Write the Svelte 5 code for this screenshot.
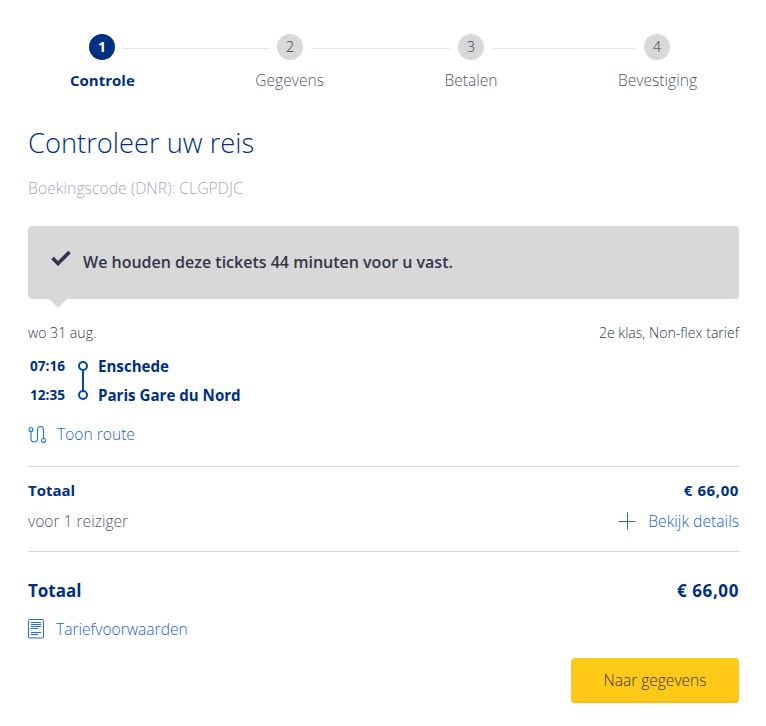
<script>
  const steps = ['Controle', 'Gegevens', 'Betalen', 'Bevestiging'];
  const lines = [146, 139, 144];
</script>

<main class="page">
  <div class="steps">
    <div class="dots">
      {#each steps as step, i}
        <span class="dot" class:active={i === 0}>{i + 1}</span>
        {#if i < 3}
          <span class="line" style="width: {lines[i]}px"></span>
        {/if}
      {/each}
    </div>
    <div class="labels">
      {#each steps as step, i}
        <span class="label" class:active={i === 0}>{step}</span>
      {/each}
    </div>
  </div>

  <h1>Controleer uw reis</h1>
  <p class="code">Boekingscode (DNR): CLGPDJC</p>

  <div class="notice">
    <svg class="check" width="20" height="16" viewBox="0 0 20 16">
      <path d="M1.5 8 L7 13.5 L18.5 2" fill="none" stroke="#35354a" stroke-width="3.6" />
    </svg>
    <strong>We houden deze tickets 44 minuten voor u vast.</strong>
  </div>

  <div class="meta">
    <span>wo 31 aug.</span>
    <span>2e klas, Non-flex tarief</span>
  </div>

  <div class="trip">
    <div class="stop">
      <span class="time">07:16</span>
      <span class="node first"></span>
      <span class="place">Enschede</span>
    </div>
    <div class="stop">
      <span class="time">12:35</span>
      <span class="node"></span>
      <span class="place">Paris Gare du Nord</span>
    </div>
  </div>

  <a class="link route" href="#route">
    <svg width="18" height="18" viewBox="0 0 18 18" fill="none" stroke="#1f6fd8" stroke-width="1.1">
      <circle cx="3" cy="4.5" r="2" />
      <circle cx="15.5" cy="15.5" r="2" />
      <path d="M3 6.5 V13.5 Q3 17 6.2 17 Q9.5 17 9.5 13.5 V5 Q9.5 1.5 12.5 1.5 Q15.5 1.5 15.5 5 V13.5" />
    </svg>
    Toon route
  </a>

  <div class="summary">
    <div class="row bold">
      <span>Totaal</span>
      <span class="price">€ 66,00</span>
    </div>
    <div class="row sub">
      <span>voor 1 reiziger</span>
      <a class="link details" href="#details">
        <svg class="plus" width="18" height="18" viewBox="0 0 18 18" fill="none">
          <path d="M0.5 9.5 H17.5 M9.5 0.5 V17.5" />
        </svg>
        Bekijk details
      </a>
    </div>
  </div>

  <div class="row total">
    <span>Totaal</span>
    <span class="price">€ 66,00</span>
  </div>

  <a class="link terms" href="#terms">
    <svg width="17" height="20" viewBox="0 0 17 20" fill="none" stroke="#1f6fd8">
      <rect x="0.5" y="0.5" width="15" height="18.5" rx="1" />
      <path d="M3 3.5 H13 M3 5.5 H13 M3 7.5 H13 M3 9.5 H10 M3 13.5 H13 M3 15.5 H10" />
    </svg>
    Tariefvoorwaarden
  </a>

  <div class="actions">
    <button type="button">Naar gegevens</button>
  </div>
</main>

<style>
  :global(body) {
    background: #fff;
    font-family: "Open Sans", "Noto Sans", sans-serif;
    color: #55556a;
  }

  .page {
    padding: 34px 27px 23px 28px;
    font-size: 14px;
    font-weight: 300;
  }

  .dots {
    display: flex;
    align-items: center;
    padding-left: 61px;
  }

  .dot {
    flex: none;
    width: 26px;
    height: 26px;
    border-radius: 50%;
    background: #d8d8d8;
    color: #35354a;
    font-size: 14px;
    font-weight: 300;
    line-height: 26px;
    text-align: center;
  }

  .dot.active {
    background: #003082;
    color: #fff;
    font-weight: 700;
  }

  .line {
    flex: none;
    height: 1px;
    margin: 2px 8px 0;
    background: #e6e6e6;
  }

  .labels {
    display: flex;
    justify-content: space-between;
    padding: 8px 42px 0;
    font-size: 15.6px;
    font-weight: 300;
    line-height: 24px;
    color: #55556a;
  }

  .label.active {
    color: #003082;
    font-size: 15px;
    font-weight: 700;
  }

  h1 {
    margin: 33px 0 0;
    color: #003082;
    font-size: 27.3px;
    font-weight: 300;
    line-height: 36px;
  }

  .code {
    margin: 16px 0 0;
    color: #a9a9b8;
    font-size: 15.8px;
    font-weight: 300;
    line-height: 22px;
  }

  .notice {
    position: relative;
    display: flex;
    align-items: center;
    gap: 12px;
    height: 73px;
    margin-top: 27px;
    padding-left: 23px;
    border-radius: 4px;
    background: #d8d8d8;
    color: #35354a;
    font-size: 16px;
    line-height: 20px;
  }

  .notice strong {
    font-weight: 600;
    margin-bottom: 2px;
  }

  .notice::after {
    content: "";
    position: absolute;
    left: 21px;
    bottom: -9px;
    border-style: solid;
    border-width: 9px 9px 0;
    border-color: #d8d8d8 transparent transparent;
  }

  .check {
    margin-top: -10px;
  }

  .meta {
    display: flex;
    justify-content: space-between;
    margin-top: 25px;
    font-size: 14.1px;
    font-weight: 300;
    line-height: 18px;
    color: #35354a;
  }

  .trip {
    margin-top: 9px;
  }

  .stop {
    display: flex;
    align-items: center;
    height: 29px;
    color: #003082;
    font-weight: 700;
  }

  .time {
    width: 50px;
    padding-left: 2px;
    box-sizing: border-box;
    font-size: 13.6px;
  }

  .node {
    position: relative;
    width: 10px;
    height: 10px;
    box-sizing: border-box;
    border: 2px solid #0047ab;
    border-radius: 50%;
  }

  .node.first::after {
    content: "";
    position: absolute;
    left: 2px;
    top: 8px;
    width: 2px;
    height: 21px;
    background: #0047ab;
  }

  .place {
    margin-left: 10px;
    font-size: 15.1px;
  }

  .link {
    display: flex;
    align-items: center;
    color: #1a62d0;
    font-size: 15.6px;
    font-weight: 300;
    text-decoration: none;
  }

  .route {
    gap: 11px;
    margin-top: 13px;
    line-height: 24px;
  }

  .summary {
    margin-top: 20px;
    padding: 11px 0 18px;
    border-top: 1px solid #d8d8d8;
    border-bottom: 1px solid #d8d8d8;
  }

  .row {
    display: flex;
    justify-content: space-between;
    align-items: center;
  }

  .bold {
    color: #003082;
    font-weight: 700;
    font-size: 15px;
    line-height: 24px;
  }

  .price {
    letter-spacing: 0.6px;
  }

  .sub {
    margin-top: 7px;
    font-size: 15.6px;
    font-weight: 300;
    line-height: 24px;
  }

  .details {
    gap: 12px;
    font-size: 15.7px;
  }

  .plus {
    stroke: #2f5fee;
    stroke-width: 1;
  }

  .total {
    margin-top: 25px;
    color: #003082;
    font-size: 17px;
    font-weight: 700;
    line-height: 28px;
  }

  .terms {
    gap: 11px;
    margin-top: 12px;
    line-height: 24px;
  }

  .actions {
    display: flex;
    justify-content: flex-end;
    margin-top: 17px;
  }

  button {
    width: 168px;
    height: 45px;
    border: 0;
    border-bottom: 2px solid #ffb81c;
    border-radius: 4px;
    background: #ffc917;
    color: #35354a;
    font: 300 15.5px "Open Sans", "Noto Sans", sans-serif;
  }
</style>
